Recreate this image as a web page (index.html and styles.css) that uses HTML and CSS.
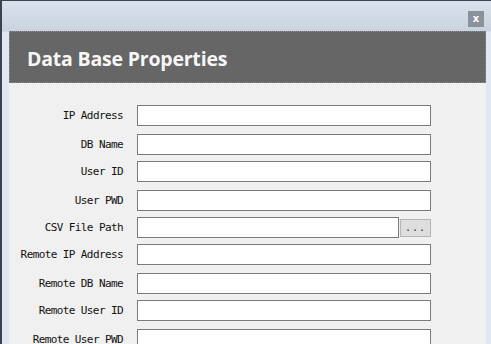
FILE: index.html
```html
<!DOCTYPE html>
<html lang="en">
<head>
    <meta charset="UTF-8">
    <title>Data Base Properties</title>
    <link rel="stylesheet" href="styles.css">
</head>
<body>
    <div class="window">
        <div class="titlebar">
            <button class="close-btn">x</button>
        </div>
        <div class="panel">
            <div class="panel-header">
                <h1>Data Base Properties</h1>
            </div>
            <div class="panel-body">
                <div class="form-row">
                    <label>IP Address</label>
                    <input type="text">
                </div>
                <div class="form-row wide">
                    <label>DB Name</label>
                    <input type="text">
                </div>
                <div class="form-row">
                    <label>User ID</label>
                    <input type="text">
                </div>
                <div class="form-row wide">
                    <label>User PWD</label>
                    <input type="password">
                </div>
                <div class="form-row">
                    <label>CSV File Path</label>
                    <div class="file-pick">
                        <input type="text">
                        <button class="browse-btn">...</button>
                    </div>
                </div>
                <div class="form-row">
                    <label>Remote IP Address</label>
                    <input type="text">
                </div>
                <div class="form-row wide">
                    <label>Remote DB Name</label>
                    <input type="text">
                </div>
                <div class="form-row">
                    <label>Remote User ID</label>
                    <input type="text">
                </div>
                <div class="form-row wide">
                    <label>Remote User PWD</label>
                    <input type="password">
                </div>
            </div>
        </div>
    </div>
</body>
</html>
```

FILE: styles.css
```css
body {
    margin: 0;
    overflow: hidden;
    height: 344px;
    background: #dfe7f1;
    font-family: "DejaVu Sans Mono", monospace;
}

/* outer window frame */
.window {
    height: 100%;
    border-top: 1px solid #3d434c;
    border-left: 2px solid #3d434c;
    background: linear-gradient(#d9e2ec, #c8d3df 30px, #dfe7f1 31px);
    box-sizing: border-box;
}

.titlebar {
    height: 30px;
    display: flex;
    justify-content: flex-end;
    align-items: flex-start;
    padding-right: 7px;
}

.close-btn {
    margin-top: 10px;
    width: 16px;
    height: 16px;
    padding: 0;
    border: none;
    background-color: #8b929b;
    color: #fff;
    font-family: "DejaVu Sans", sans-serif;
    font-size: 10px;
    font-weight: bold;
    line-height: 14px;
}

/* Main panel */
.panel {
    margin: 0 5px 0 7px;
    height: 313px;
    background-color: #f0f0f0;
}

.panel-header {
    height: 50px;
    background-color: #666;
    border: 1px dotted #8e8e8e;
    display: flex;
    align-items: center;
    padding-left: 17px;
}

.panel-header h1 {
    margin: 2px 0 0 0;
    font-family: "Open Sans", sans-serif;
    font-size: 19.5px;
    font-weight: bold;
    color: #f6f6f6;
    letter-spacing: -0.2px;
}

.panel-body {
    padding-top: 22px;
}

.form-row {
    display: grid;
    grid-template-columns: 114px 294px;
    column-gap: 14px;
    align-items: center;
    height: 21px;
    margin-top: 6px;
}

.form-row:first-child {
    margin-top: 0;
}

.form-row.wide {
    margin-top: 8px;
}

.form-row label {
    text-align: right;
    font-size: 11px;
    letter-spacing: -0.6px;
    color: #111;
    white-space: nowrap;
}

.form-row input {
    height: 21px;
    width: 100%;
    box-sizing: border-box;
    margin: 0;
    border: 1px solid #7a7a7a;
    background: #fff;
    padding: 0 3px;
}

.file-pick {
    display: flex;
    align-items: center;
    gap: 1px;
}

.file-pick input {
    width: 262px;
}

.browse-btn {
    width: 31px;
    height: 18px;
    margin-top: 1px;
    padding: 0;
    border: 1px solid #b5b5b5;
    background-color: #dedede;
    font-family: "Liberation Mono", monospace;
    font-size: 10px;
    color: #222;
    letter-spacing: 1px;
}
```
